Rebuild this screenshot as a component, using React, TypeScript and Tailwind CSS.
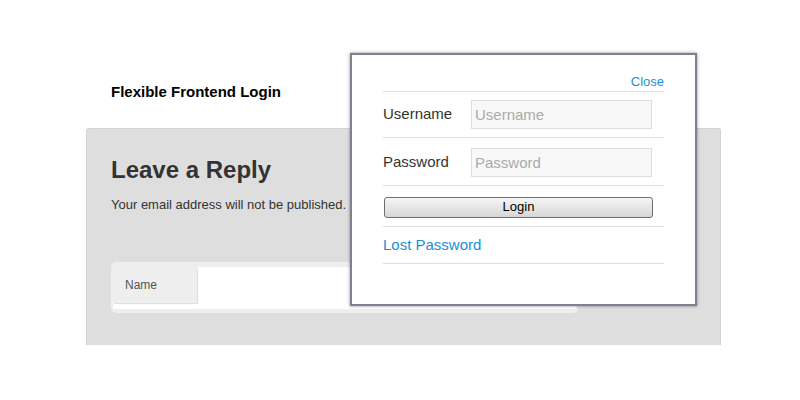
export default function App() {
  return (
    <div className="relative w-[800px] h-[400px] overflow-hidden bg-white font-['Liberation_Sans',Arial,sans-serif] text-[#333]">
      {/* Page heading */}
      <div className="pl-[111px] pt-[83px]">
        <h1 className="text-[15px] font-bold leading-[18px] text-black">Flexible Frontend Login</h1>
      </div>

      {/* Comment area */}
      <div className="ml-[86px] mt-[27px] h-[217px] w-[635px] rounded-t-[3px] border-x border-t border-[#d2d2d2] bg-[#dedede] px-[24px] pt-[27px]">
        <h2 className="text-[24px] font-bold leading-[28px] text-[#333]">Leave a Reply</h2>
        <p className="mt-[13px] text-[13px] leading-[16px] text-[#333]">Your email address will not be published.</p>

        <div className="mt-[49px] w-[467px] rounded-[5px] bg-[#eeeeee] px-[2px] pt-[5px] pb-[4px]">
          <div className="flex h-[42px] items-start bg-white">
            <div className="flex h-[36px] w-[84px] items-center bg-[#eeeeee] pl-[12px] text-[12px] text-[#555] shadow-[1px_1px_1px_rgba(0,0,0,0.12)]">
              Name
            </div>
          </div>
        </div>
      </div>

      {/* Login popup */}
      <div className="absolute left-[350px] top-[53px] h-[253px] w-[347px] border-2 border-[#80808e] bg-white pl-[31px] pr-[31px] pt-[19px] shadow-[0_0_3px_rgba(60,60,80,0.6)]">
        <div className="flex justify-end">
          <a className="text-[13px] leading-[16px] text-[#1a8fd6]" href="#">Close</a>
        </div>
        <div className="mt-[1px] border-t border-[#dddddd]" />
        <div className="flex h-[45px] items-center">
          <label className="w-[88px] text-[15px] text-[#333]">Username</label>
          <input
            className="h-[29px] w-[181px] border border-[#dddddd] bg-[#f8f8f8] px-[3px] text-[15px] text-[#333] placeholder:text-[#aaa] outline-none"
            placeholder="Username"
          />
        </div>
        <div className="border-t border-[#dddddd]" />
        <div className="flex h-[47px] items-center pt-[2px]">
          <label className="w-[88px] text-[15px] text-[#333]">Password</label>
          <input
            type="password"
            className="h-[29px] w-[181px] border border-[#dddddd] bg-[#f8f8f8] px-[3px] text-[15px] text-[#333] placeholder:text-[#aaa] outline-none"
            placeholder="Password"
          />
        </div>
        <div className="border-t border-[#dddddd]" />
        <div className="flex h-[40px] items-center pt-[2px]">
          <button className="ml-[1px] h-[21px] w-[269px] rounded-[3px] border border-[#6e6e6e] bg-gradient-to-b from-[#f6f6f6] to-[#d6d6d6] text-[13px] leading-[18px] text-black">
            Login
          </button>
        </div>
        <div className="border-t border-[#dddddd]" />
        <div className="flex h-[36px] items-center">
          <a className="text-[15px] text-[#1a8fd6]" href="#">Lost Password</a>
        </div>
        <div className="border-t border-[#dddddd]" />
      </div>
    </div>
  )
}
